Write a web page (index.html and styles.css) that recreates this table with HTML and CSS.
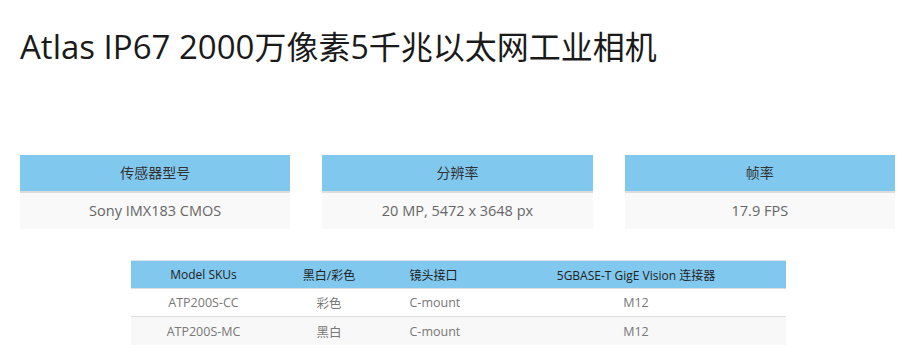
FILE: index.html
```html
<!DOCTYPE html>
<html lang="zh-CN">
<head>
<meta charset="utf-8">
<title>Atlas IP67</title>
<link rel="stylesheet" href="styles.css">
</head>
<body>
<h1 class="title"><span class="latin">Atlas IP67 2000</span>万像素5千兆以太网工业相机</h1>
<div class="cards">
  <div class="card">
    <div class="card-head">传感器型号</div>
    <div class="card-body">Sony IMX183 CMOS</div>
  </div>
  <div class="card">
    <div class="card-head">分辨率</div>
    <div class="card-body">20 MP, 5472 x 3648 px</div>
  </div>
  <div class="card">
    <div class="card-head">帧率</div>
    <div class="card-body">17.9 FPS</div>
  </div>
</div>
<table class="skus">
  <thead>
    <tr>
      <th class="c1">Model SKUs</th>
      <th class="c2">黑白/彩色</th>
      <th class="c3">镜头接口</th>
      <th class="c4">5GBASE-T GigE Vision 连接器</th>
    </tr>
  </thead>
  <tbody>
    <tr>
      <td class="c1">ATP200S-CC</td>
      <td class="c2">彩色</td>
      <td class="c3">C-mount</td>
      <td class="c4">M12</td>
    </tr>
    <tr class="alt">
      <td class="c1">ATP200S-MC</td>
      <td class="c2">黑白</td>
      <td class="c3">C-mount</td>
      <td class="c4">M12</td>
    </tr>
  </tbody>
</table>
</body>
</html>
```
FILE: styles.css
```css
html, body {
  margin: 0;
  padding: 0;
  background: #ffffff;
}
body {
  font-family: "Open Sans", "Noto Sans CJK SC", sans-serif;
  color: #222;
}
.title {
  margin: 27px 0 0 20px;
  font-size: 32px;
  line-height: 40px;
  font-weight: 400;
  color: #1a1a1a;
}
.latin {
  font-size: 33px;
}
.cards {
  display: flex;
  gap: 32px;
  padding: 0 21px 0 20px;
  margin-top: 88px;
}
.card {
  flex: 1 1 0;
  text-align: center;
}
.card-head {
  background: #81c8ee;
  height: 36px;
  line-height: 36px;
  font-size: 14px;
  color: #333;
  border-bottom: 2px solid #dcdcdc;
}
.card-body {
  background: #f9f9f9;
  height: 36px;
  line-height: 36px;
  font-size: 14.5px;
  color: #666;
}
.skus {
  margin: 31px auto 0;
  width: 655px;
  border-collapse: collapse;
  font-size: 12px;
  table-layout: fixed;
}
.skus th {
  background: #81c8ee;
  font-weight: 400;
  color: #222;
  height: 27px;
  padding: 0;
  border-top: 1px solid #d8e4ea;
  border-bottom: 1px solid #dddddd;
}
.skus td {
  height: 27px;
  padding: 0;
  font-size: 12.5px;
  color: #777;
  border-bottom: 1px solid #dddddd;
}
.skus tr.alt td {
  background: #f8f8f8;
  border-bottom: none;
  height: 28px;
}
.c1 { width: 146px; text-align: center; }
.c2 { width: 105px; text-align: center; }
.c3 { width: 77px; text-align: left; padding-left: 28px !important; }
.c4 { text-align: center; }
```
